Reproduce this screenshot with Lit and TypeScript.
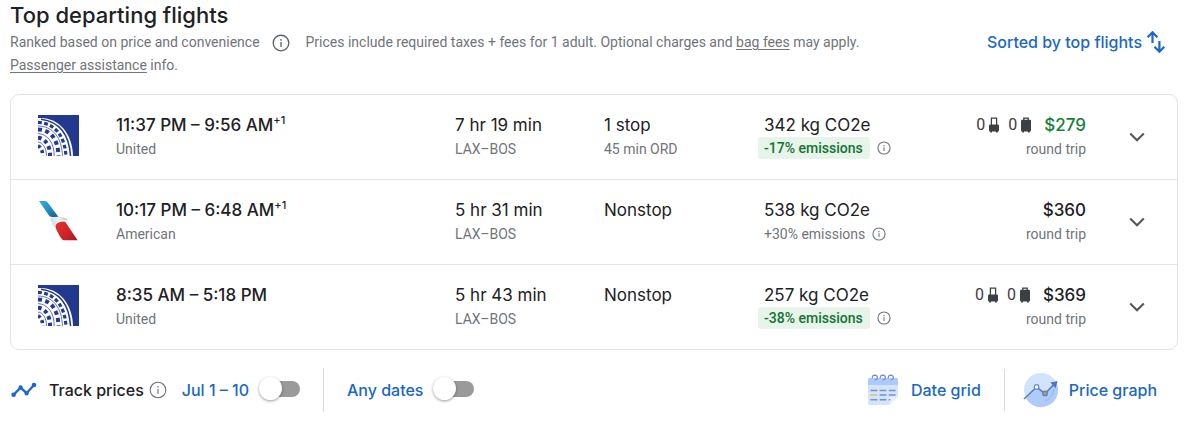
import { LitElement, html, css, svg, nothing } from "lit";
import { customElement } from "lit/decorators.js";

interface Flight {
  airline: "United" | "American";
  times: string;
  plusDays?: string;
  duration: string;
  stops: string;
  stopDetail?: string;
  co2: string;
  emissions: string;
  lower: boolean;
  bags: boolean;
  price: string;
  deal?: boolean;
}

const flights: Flight[] = [
  { airline: "United", times: "11:37 PM – 9:56 AM", plusDays: "+1", duration: "7 hr 19 min", stops: "1 stop", stopDetail: "45 min ORD", co2: "342 kg CO2e", emissions: "-17% emissions", lower: true, bags: true, price: "$279", deal: true },
  { airline: "American", times: "10:17 PM – 6:48 AM", plusDays: "+1", duration: "5 hr 31 min", stops: "Nonstop", co2: "538 kg CO2e", emissions: "+30% emissions", lower: false, bags: false, price: "$360" },
  { airline: "United", times: "8:35 AM – 5:18 PM", duration: "5 hr 43 min", stops: "Nonstop", co2: "257 kg CO2e", emissions: "-38% emissions", lower: true, bags: true, price: "$369" },
];

const info = (size: number, weight = 1.8) => html`
  <svg width=${size} height=${size} viewBox="0 0 24 24" fill="none" stroke="currentColor" stroke-width=${weight} aria-hidden="true">
    <circle cx="12" cy="12" r="10.4" />
    <path d="M12 10.6V17.2M12 6.8V9" />
  </svg>`;

/* Blue gaps on the white globe: meridians falling from the upper left to the bottom edge. */
const globeBands = [
  { d: "M3 4.2C20 6.5 31.4 18 32.6 42", w: 1.5, dash: "" },
  { d: "M0 7.4C16 8 27 20 28 42", w: 3.2, dash: "3.8 2.4" },
  { d: "M0 14.4C12 14.6 20.6 24 20.4 42", w: 4, dash: "4 3.4" },
  { d: "M0 22.8C7 23.4 12.4 30 12 42", w: 4, dash: "3.6 3.4" },
  { d: "M0 31C3 32 4.8 36 4.6 42", w: 3.6, dash: "3 2.8" },
];

const unitedLogo = html`
  <svg width="41" height="41" viewBox="0 0 41 41" role="img" aria-label="United">
    <rect width="41" height="41" fill="#22398f" />
    <path d="M0 3C20 1.4 34.6 18 35 41H0Z" fill="#fff" />
    <g fill="none" stroke="#22398f">
      ${globeBands.map((b) => svg`<path d=${b.d} stroke-width=${b.w} stroke-dasharray=${b.dash || nothing} />`)}
      <path stroke-width=".7" d="M0 11C14 11 24.4 22 24.4 42M0 18.6C9 19 16.6 27 16.2 42M0 27C5 27.6 8.8 33 8.4 42" />
    </g>
  </svg>`;

const americanLogo = html`
  <svg width="41" height="41" viewBox="0 0 41 41" role="img" aria-label="American">
    <defs>
      <linearGradient id="blue" x1="0" y1="0" x2="1" y2="1">
        <stop offset="0" stop-color="#2fb1dc" /><stop offset=".5" stop-color="#2590c4" /><stop offset="1" stop-color="#145a87" />
      </linearGradient>
      <linearGradient id="red" x1="0" y1="0" x2="1" y2="1">
        <stop offset="0" stop-color="#e5302b" /><stop offset=".6" stop-color="#cf2228" /><stop offset="1" stop-color="#9e1b20" />
      </linearGradient>
      <linearGradient id="grey" x1="0" y1="0" x2="1" y2="0">
        <stop offset="0" stop-color="#d3dbe0" /><stop offset=".5" stop-color="#eef1f3" /><stop offset="1" stop-color="#a9b8c1" />
      </linearGradient>
    </defs>
    <path fill="url(#blue)" d="M1 1H6.5Q9 1 10.5 3.4L20.5 17H14Q11.5 17 10.3 14.4Z" />
    <path fill="url(#grey)" d="M12 18.8Q14 16.6 20 16.8Q27.5 16.9 30 20.4Q26.5 19.2 22.2 20.6Q17.6 22.2 17.2 25.6Q17 27.6 18 30Q14 25 12 18.8Z" />
    <path fill="url(#red)" d="M27.2 21.8L39.6 40.2H26.8Q24 40.2 22.4 37.2L18.4 29.8Q15.8 24.4 20.6 22.4Q23.6 21.2 27.2 21.8Z" />
  </svg>`;

const carryOn = html`
  <svg width="10" height="16" viewBox="0 0 10 16" role="img" aria-label="carry-on bags">
    <path d="M2.4 9V1.2H7.6V9" fill="none" stroke="#3c4043" stroke-width="1.3" />
    <path d="M1.3 7.4H8.7Q10 7.4 10 8.7V13.2Q10 14.5 8.8 14.5V15.6H7V14.5H3V15.6H1.2V14.5Q0 14.5 0 13.2V8.7Q0 7.4 1.3 7.4Z" fill="#3c4043" />
  </svg>`;

const checkedBag = html`
  <svg width="10" height="16" viewBox="0 0 10 16" role="img" aria-label="checked bags">
    <path d="M2.8 4V1.2H7.2V4" fill="none" stroke="#3c4043" stroke-width="1.3" />
    <path d="M1.3 2.8H8.7Q10 2.8 10 4.1V13.2Q10 14.5 8.8 14.5V15.6H7V14.5H3V15.6H1.2V14.5Q0 14.5 0 13.2V4.1Q0 2.8 1.3 2.8Z" fill="#3c4043" />
  </svg>`;

const chevron = html`
  <svg width="16" height="10" viewBox="0 0 16 10" fill="none" stroke="#55585c" stroke-width="2.1" aria-hidden="true">
    <path d="M1.2 1.4L8 8.2L14.8 1.4" />
  </svg>`;

const sortIcon = html`
  <svg width="20" height="24" viewBox="0 0 20 24" fill="none" stroke="currentColor" stroke-width="2.2" aria-hidden="true">
    <path d="M6.5 13V2.6M1.6 7.2L6.5 2.2L11.4 7.2M13.4 11V21.4M8.5 16.8L13.4 21.8L18.3 16.8" />
  </svg>`;

const trendIcon = html`
  <svg width="26" height="16" viewBox="0 0 26 16" fill="#1b66d2" aria-hidden="true">
    <path d="M2.6 12.8L9.6 5.6L15.6 11.2L23 3" fill="none" stroke="#1b66d2" stroke-width="2.3" />
    <circle cx="2.6" cy="12.8" r="2.3" /><circle cx="9.6" cy="5.4" r="2.1" /><circle cx="15.6" cy="11.4" r="2.1" /><circle cx="23" cy="3" r="2.3" />
  </svg>`;

const dateGridIcon = html`
  <svg width="30" height="32" viewBox="0 0 30 32" aria-hidden="true">
    <path d="M1.6 4H28.4Q30 4 30 5.6V22.6L21.6 31H1.6Q0 31 0 29.4V5.6Q0 4 1.6 4Z" fill="#d5e4fb" />
    <path d="M1.6 4H28.4Q30 4 30 5.6V11H0V5.6Q0 4 1.6 4Z" fill="#aecbf8" />
    <path d="M21.6 31V25Q21.6 22.6 24 22.6H30Z" fill="#e8f0fe" />
    <path d="M4.4 4.4Q3.8 1.2 7 1.2Q9.6 1.4 9.4 4Q9 6 6.8 5.8M12.4 4.4Q11.8 1.2 15 1.2Q17.6 1.4 17.4 4Q17 6 14.8 5.8M20.4 4.4Q19.8 1.2 23 1.2Q25.6 1.4 25.4 4Q25 6 22.8 5.8" fill="none" stroke="#6d91cf" stroke-width="1.2" />
    <g fill="none" stroke="#6f94d4" stroke-width="1.5">
      <path d="M2.4 16.4H9.4M11.6 16.4H18.4M20.8 16.4H27.6M11.6 21H18.4M20.8 21H27.6M2.4 25.8H9.4M11.6 25.8H18.4M20.8 25.8H22.4" />
      <path d="M2.4 21H9.4" stroke="#e0be73" />
    </g>
  </svg>`;

const priceGraphIcon = html`
  <svg width="36" height="36" viewBox="0 0 36 36" aria-hidden="true">
    <circle cx="18" cy="18" r="17" fill="#d2e3fc" />
    <path d="M3 26L14 14.5L22 22L33.5 11A17 17 0 0 1 3 26Z" fill="#aecbfa" />
    <path d="M22 29Q29 27 31 17" fill="none" stroke="#93b7f2" stroke-width="1" />
    <path d="M1 27L13.6 15L22 21.6L31 12.4" fill="none" stroke="#5b7fbf" stroke-width="1.6" />
    <path d="M27.4 10.6L34.6 9L32.6 16.2Z" fill="#4a74c4" />
    <circle cx="13.6" cy="15" r="2.3" fill="#fff" stroke="#6a8dca" stroke-width="1.2" />
    <circle cx="22" cy="21.4" r="2.3" fill="#a79c86" stroke="#6b7f9f" stroke-width="1.2" />
  </svg>`;

@customElement("app-root")
export class AppRoot extends LitElement {
  static styles = css`
    :host {
      display: block;
      box-sizing: border-box;
      padding: 0 22px 0 10px;
      background: #fff;
      color: #70757a;
      font: 14px/24px Roboto, sans-serif;
    }
    svg { display: block; flex: none; }
    h2, p, ul { margin: 0; padding: 0; }
    button {
      border: 0;
      padding: 0;
      background: none;
      color: #1967c8;
      font: 500 16px/24px Inter, sans-serif;
      display: inline-flex;
      align-items: center;
      white-space: nowrap;
      cursor: pointer;
    }
    h2 { color: #202124; font: 500 22px/30px Inter, sans-serif; }
    .intro { display: flex; justify-content: space-between; align-items: flex-start; gap: 24px; }
    .note { max-width: 890px; padding-top: 1px; line-height: 23px; }
    .note a { color: inherit; text-decoration: underline; text-underline-offset: 2px; }
    .note button { color: #5f6368; vertical-align: middle; margin: 0 12px 0 9px; }
    .sort { gap: 4px; margin-right: 12px; }
    .list {
      margin-top: 17px;
      border: 1px solid #e3e4e7;
      border-radius: 9px;
      list-style: none;
    }
    .row {
      display: grid;
      grid-template-columns: 105px 339fr 149fr 160fr 160fr 162fr 91px;
      padding: 18px 0;
    }
    .row + .row { border-top: 1px solid #e3e4e7; }
    .logo { padding: 2px 0 0 27px; }
    .main { color: #202124; font: 17px/24px Inter, sans-serif; white-space: nowrap; }
    .strong { font-weight: 500; }
    .main sup { font-size: 11px; line-height: 12px; }
    .emissions { display: flex; align-items: center; gap: 7px; white-space: nowrap; }
    .badge {
      margin-left: -6px;
      padding: 0 7px 0 6px;
      border-radius: 3px;
      background: #e6f4ea;
      color: #137333;
      font-weight: 500;
      line-height: 22px;
    }
    .emissions button { color: #70757a; }
    .fare { text-align: right; }
    .fare .main { display: flex; justify-content: flex-end; align-items: center; }
    .bag { display: flex; align-items: center; gap: 4px; margin-right: 9px; color: #3c4043; font: 16px/24px Roboto, sans-serif; }
    .bag + .strong { margin-left: 4px; }
    .main .deal { color: #188038; }
    .expand { justify-content: center; padding-left: 10px; }
    .tools { display: flex; align-items: center; margin-top: 18px; }
    .tools label, .track { color: #202124; font: 500 16px/24px Inter, sans-serif; white-space: nowrap; }
    .track { display: flex; align-items: center; }
    .trend { margin: 0 12px 0 1px; }
    .track button { color: #70757a; margin: 0 15px 0 5px; }
    .tools .option { display: flex; align-items: center; gap: 10px; color: #1967c8; cursor: pointer; }
    .switch {
      appearance: none;
      display: flex;
      align-items: center;
      box-sizing: border-box;
      width: 41px;
      height: 16px;
      margin: 0 0 3px;
      border-radius: 8px;
      background: linear-gradient(to right, transparent 12px, #9a9a9a 12px);
      cursor: pointer;
    }
    .switch::before {
      content: "";
      width: 23px;
      height: 23px;
      border-radius: 50%;
      background: #fff;
      box-shadow: 0 1px 3px rgba(0, 0, 0, 0.4);
    }
    .switch:checked { justify-content: flex-end; background: linear-gradient(to left, transparent 12px, #8ab4f8 12px); }
    .rule { width: 1px; height: 44px; margin: 0 23px; background: #dadce0; }
    .views { display: flex; align-items: center; margin: 0 21px 0 auto; }
    .views .rule { margin: 0 18px 0 23px; height: 42px; }
    .grid { gap: 13px; }
    .graph { gap: 10px; }
  `;

  private row(f: Flight) {
    return html`
      <li class="row">
        <div class="logo">${f.airline === "United" ? unitedLogo : americanLogo}</div>
        <div>
          <div class="main strong">${f.times}${f.plusDays ? html`<sup>${f.plusDays}</sup>` : nothing}</div>
          <div>${f.airline}</div>
        </div>
        <div>
          <div class="main">${f.duration}</div>
          <div>LAX–BOS</div>
        </div>
        <div>
          <div class="main">${f.stops}</div>
          <div>${f.stopDetail}</div>
        </div>
        <div>
          <div class="main">${f.co2}</div>
          <div class="emissions">
            <span class=${f.lower ? "badge" : ""}>${f.emissions}</span>
            <button aria-label="About emissions">${info(14, 1.9)}</button>
          </div>
        </div>
        <div class="fare">
          <div class="main">
            ${f.bags ? html`<span class="bag">0${carryOn}</span><span class="bag">0${checkedBag}</span>` : nothing}
            <span class="strong ${f.deal ? "deal" : ""}">${f.price}</span>
          </div>
          <div>round trip</div>
        </div>
        <button class="expand" aria-label="Flight details">${chevron}</button>
      </li>`;
  }

  render() {
    return html`
      <h2>Top departing flights</h2>
      <div class="intro">
        <p class="note">
          Ranked based on price and convenience
          <button aria-label="About ranking">${info(18)}</button>
          Prices include required taxes + fees for 1 adult. Optional charges and
          <a href="#bag-fees">bag fees</a> may apply. <a href="#assistance">Passenger assistance</a> info.
        </p>
        <button class="sort">Sorted by top flights ${sortIcon}</button>
      </div>
      <ul class="list">${flights.map((f) => this.row(f))}</ul>
      <div class="tools">
        <span class="trend">${trendIcon}</span>
        <span class="track">Track prices<button aria-label="About price tracking">${info(18, 1.5)}</button></span>
        <label class="option">Jul 1 – 10 <input class="switch" type="checkbox" /></label>
        <div class="rule"></div>
        <label class="option">Any dates <input class="switch" type="checkbox" /></label>
        <div class="views">
          <button class="grid">${dateGridIcon}Date grid</button>
          <div class="rule"></div>
          <button class="graph">${priceGraphIcon}Price graph</button>
        </div>
      </div>`;
  }
}
